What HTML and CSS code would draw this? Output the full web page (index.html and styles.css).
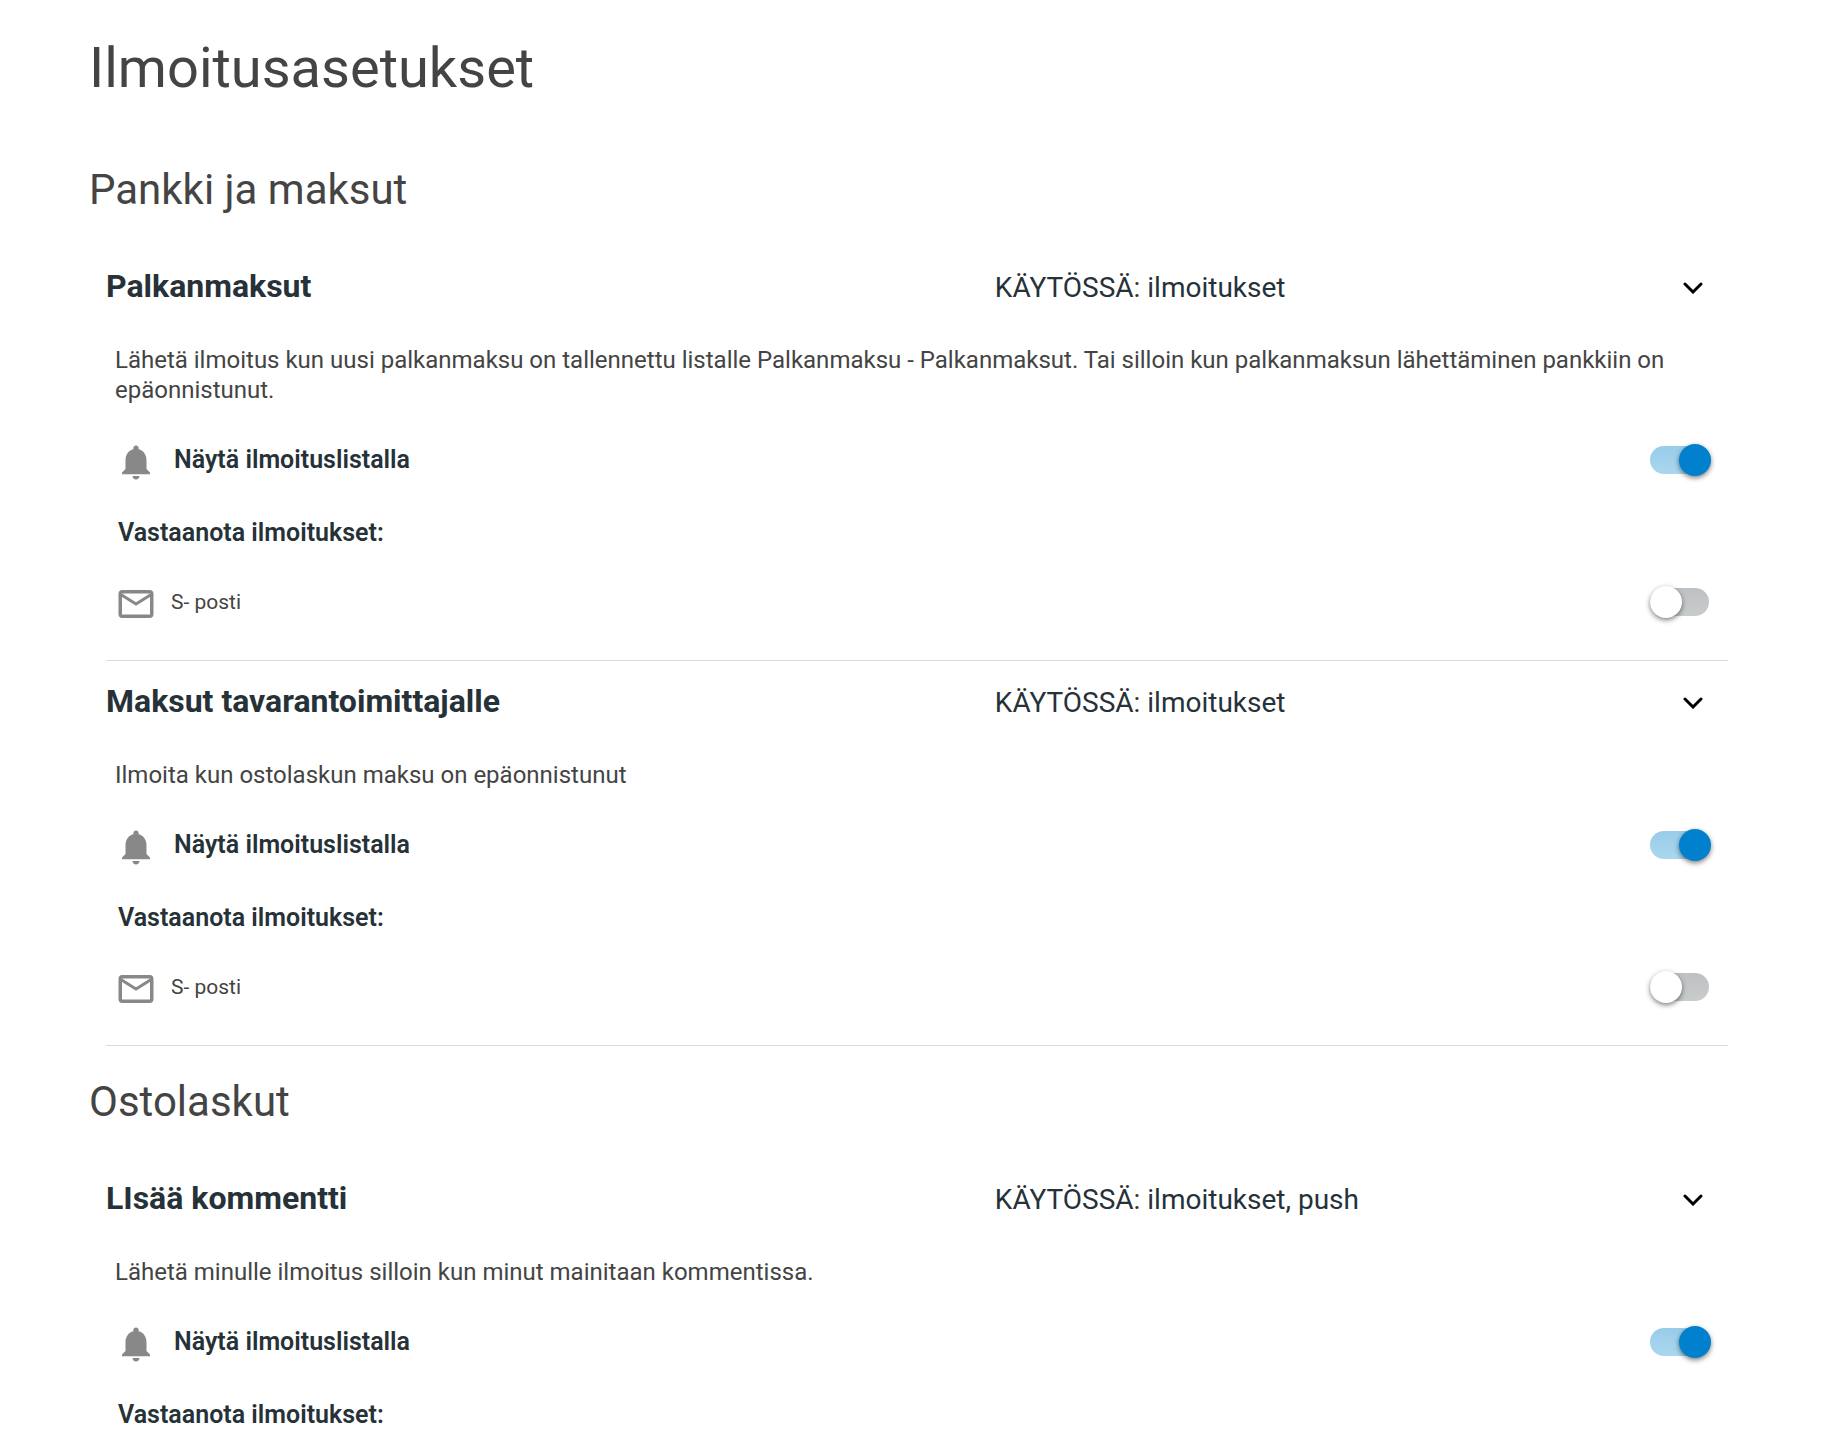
FILE: index.html
```html
<!DOCTYPE html>
<html lang="fi">
<head>
<meta charset="utf-8">
<meta name="viewport" content="width=device-width, initial-scale=1">
<title>Ilmoitusasetukset</title>
<link rel="stylesheet" href="styles.css">
</head>
<body>
<svg class="sprite" aria-hidden="true">
  <symbol id="bell" viewBox="0 0 24 24"><path d="M12 22c1.1 0 2-.9 2-2h-4c0 1.1.89 2 2 2zm6-6v-5c0-3.07-1.64-5.64-4.5-6.32V4c0-.83-.67-1.5-1.5-1.5s-1.5.67-1.5 1.5v.68C7.63 5.36 6 7.92 6 11v5l-2 2v1h16v-1l-2-2z"/></symbol>
  <symbol id="mail" viewBox="0 0 24 24"><path d="M22 6c0-1.1-.9-2-2-2H4c-1.1 0-2 .9-2 2v12c0 1.1.9 2 2 2h16c1.1 0 2-.9 2-2V6zm-2 0-8 5-8-5h16zm0 12H4V8l8 5 8-5v10z"/></symbol>
  <symbol id="chevron" viewBox="0 0 20 12"><path d="M2 2l8 8 8-8" fill="none" stroke="#000" stroke-width="3" stroke-linecap="round"/></symbol>
</svg>
<main class="page">
  <h1 class="page-title">Ilmoitusasetukset</h1>

  <section class="group">
    <h2 class="group-title">Pankki ja maksut</h2>
    <article class="item">
      <header class="item-head">
        <h3 class="item-title">Palkanmaksut</h3>
        <p class="item-status">KÄYTÖSSÄ: ilmoitukset</p>
        <button class="expander" type="button" aria-label="Palkanmaksut" aria-expanded="true"><svg class="chevron"><use href="#chevron"/></svg></button>
      </header>
      <p class="description">Lähetä ilmoitus kun uusi palkanmaksu on tallennettu listalle Palkanmaksu - Palkanmaksut. Tai silloin kun palkanmaksun lähettäminen pankkiin on epäonnistunut.</p>
      <div class="option">
        <svg class="icon"><use href="#bell"/></svg>
        <label class="option-label strong" for="salary-list">Näytä ilmoituslistalla</label>
        <input class="switch" type="checkbox" id="salary-list" checked>
      </div>
      <h4 class="subheading">Vastaanota ilmoitukset:</h4>
      <div class="option">
        <svg class="icon"><use href="#mail"/></svg>
        <label class="option-label" for="salary-mail">S- posti</label>
        <input class="switch" type="checkbox" id="salary-mail">
      </div>
    </article>
    <article class="item">
      <header class="item-head">
        <h3 class="item-title">Maksut tavarantoimittajalle</h3>
        <p class="item-status">KÄYTÖSSÄ: ilmoitukset</p>
        <button class="expander" type="button" aria-label="Maksut tavarantoimittajalle" aria-expanded="true"><svg class="chevron"><use href="#chevron"/></svg></button>
      </header>
      <p class="description">Ilmoita kun ostolaskun maksu on epäonnistunut</p>
      <div class="option">
        <svg class="icon"><use href="#bell"/></svg>
        <label class="option-label strong" for="supplier-list">Näytä ilmoituslistalla</label>
        <input class="switch" type="checkbox" id="supplier-list" checked>
      </div>
      <h4 class="subheading">Vastaanota ilmoitukset:</h4>
      <div class="option">
        <svg class="icon"><use href="#mail"/></svg>
        <label class="option-label" for="supplier-mail">S- posti</label>
        <input class="switch" type="checkbox" id="supplier-mail">
      </div>
    </article>
  </section>

  <section class="group">
    <h2 class="group-title">Ostolaskut</h2>
    <article class="item">
      <header class="item-head">
        <h3 class="item-title">LIsää kommentti</h3>
        <p class="item-status">KÄYTÖSSÄ: ilmoitukset, push</p>
        <button class="expander" type="button" aria-label="LIsää kommentti" aria-expanded="true"><svg class="chevron"><use href="#chevron"/></svg></button>
      </header>
      <p class="description">Lähetä minulle ilmoitus silloin kun minut mainitaan kommentissa.</p>
      <div class="option">
        <svg class="icon"><use href="#bell"/></svg>
        <label class="option-label strong" for="comment-list">Näytä ilmoituslistalla</label>
        <input class="switch" type="checkbox" id="comment-list" checked>
      </div>
      <h4 class="subheading">Vastaanota ilmoitukset:</h4>
    </article>
  </section>
</main>
</body>
</html>
```

FILE: styles.css
```css
* {
  box-sizing: border-box;
}

body {
  margin: 0;
  background: #fff;
  color: #444;
  font-family: Roboto, "Liberation Sans", sans-serif;
}

h1, h2, h3, h4, p {
  margin: 0;
}

.sprite {
  display: none;
}

.page {
  padding: 32px 98px 0 89px;
}

.page-title {
  margin-bottom: 46px;
  font-size: 56px;
  line-height: 72px;
  font-weight: 400;
}

.group + .group {
  padding-top: 16px;
}

.group-title {
  padding: 12px 0 28px;
  font-size: 42px;
  line-height: 56px;
  font-weight: 400;
}

.item {
  margin-left: 17px;
  padding-bottom: 26px;
  border-bottom: 1px solid #dadcdc;
}

.group:last-child .item {
  padding-bottom: 0;
  border-bottom: 0;
}

.item-head {
  display: grid;
  grid-template-columns: 548fr 400fr 52fr;
  align-items: center;
  height: 84px;
  color: #263238;
}

.item-title {
  padding-bottom: 4px;
  font-size: 32px;
  line-height: 40px;
  font-weight: 700;
}

.item-status {
  font-size: 28px;
  line-height: 40px;
}

.expander {
  justify-self: end;
  margin-right: 19px;
  padding: 10px 6px;
  border: 0;
  background: none;
  cursor: pointer;
}

.chevron {
  display: block;
  width: 20px;
  height: 12px;
}

.description {
  padding: 15px 16px 23px 9px;
  font-size: 24px;
  line-height: 30px;
}

.option {
  display: flex;
  align-items: center;
  gap: 14px;
  height: 64px;
  padding: 0 19px 0 9px;
}

.icon {
  flex: none;
  width: 42px;
  height: 42px;
  margin-top: 3px;
  fill: #888;
}

.option-label {
  flex: 1;
  font-size: 21px;
  line-height: 30px;
}

.strong {
  padding-left: 3px;
  color: #263238;
  font-size: 25px;
  font-weight: 600;
}

.subheading {
  padding: 26px 12px 22px;
  color: #263238;
  font-size: 25px;
  line-height: 30px;
  font-weight: 600;
}

.switch {
  flex: none;
  display: flex;
  align-items: center;
  appearance: none;
  width: 59px;
  height: 28px;
  margin: 0;
  border-radius: 14px;
  background: linear-gradient(#bdc1c3, #c8cccd);
  cursor: pointer;
}

.switch::before {
  content: "";
  flex: none;
  width: 32px;
  height: 32px;
  border-radius: 50%;
  background: #fff;
  box-shadow: 0 2px 5px rgba(0, 0, 0, 0.5);
}

.switch:checked {
  justify-content: flex-end;
  background: linear-gradient(#99cce9, #aad7ef);
}

.switch:checked::before {
  margin-right: -2px;
  background: #0080cd;
}
```
